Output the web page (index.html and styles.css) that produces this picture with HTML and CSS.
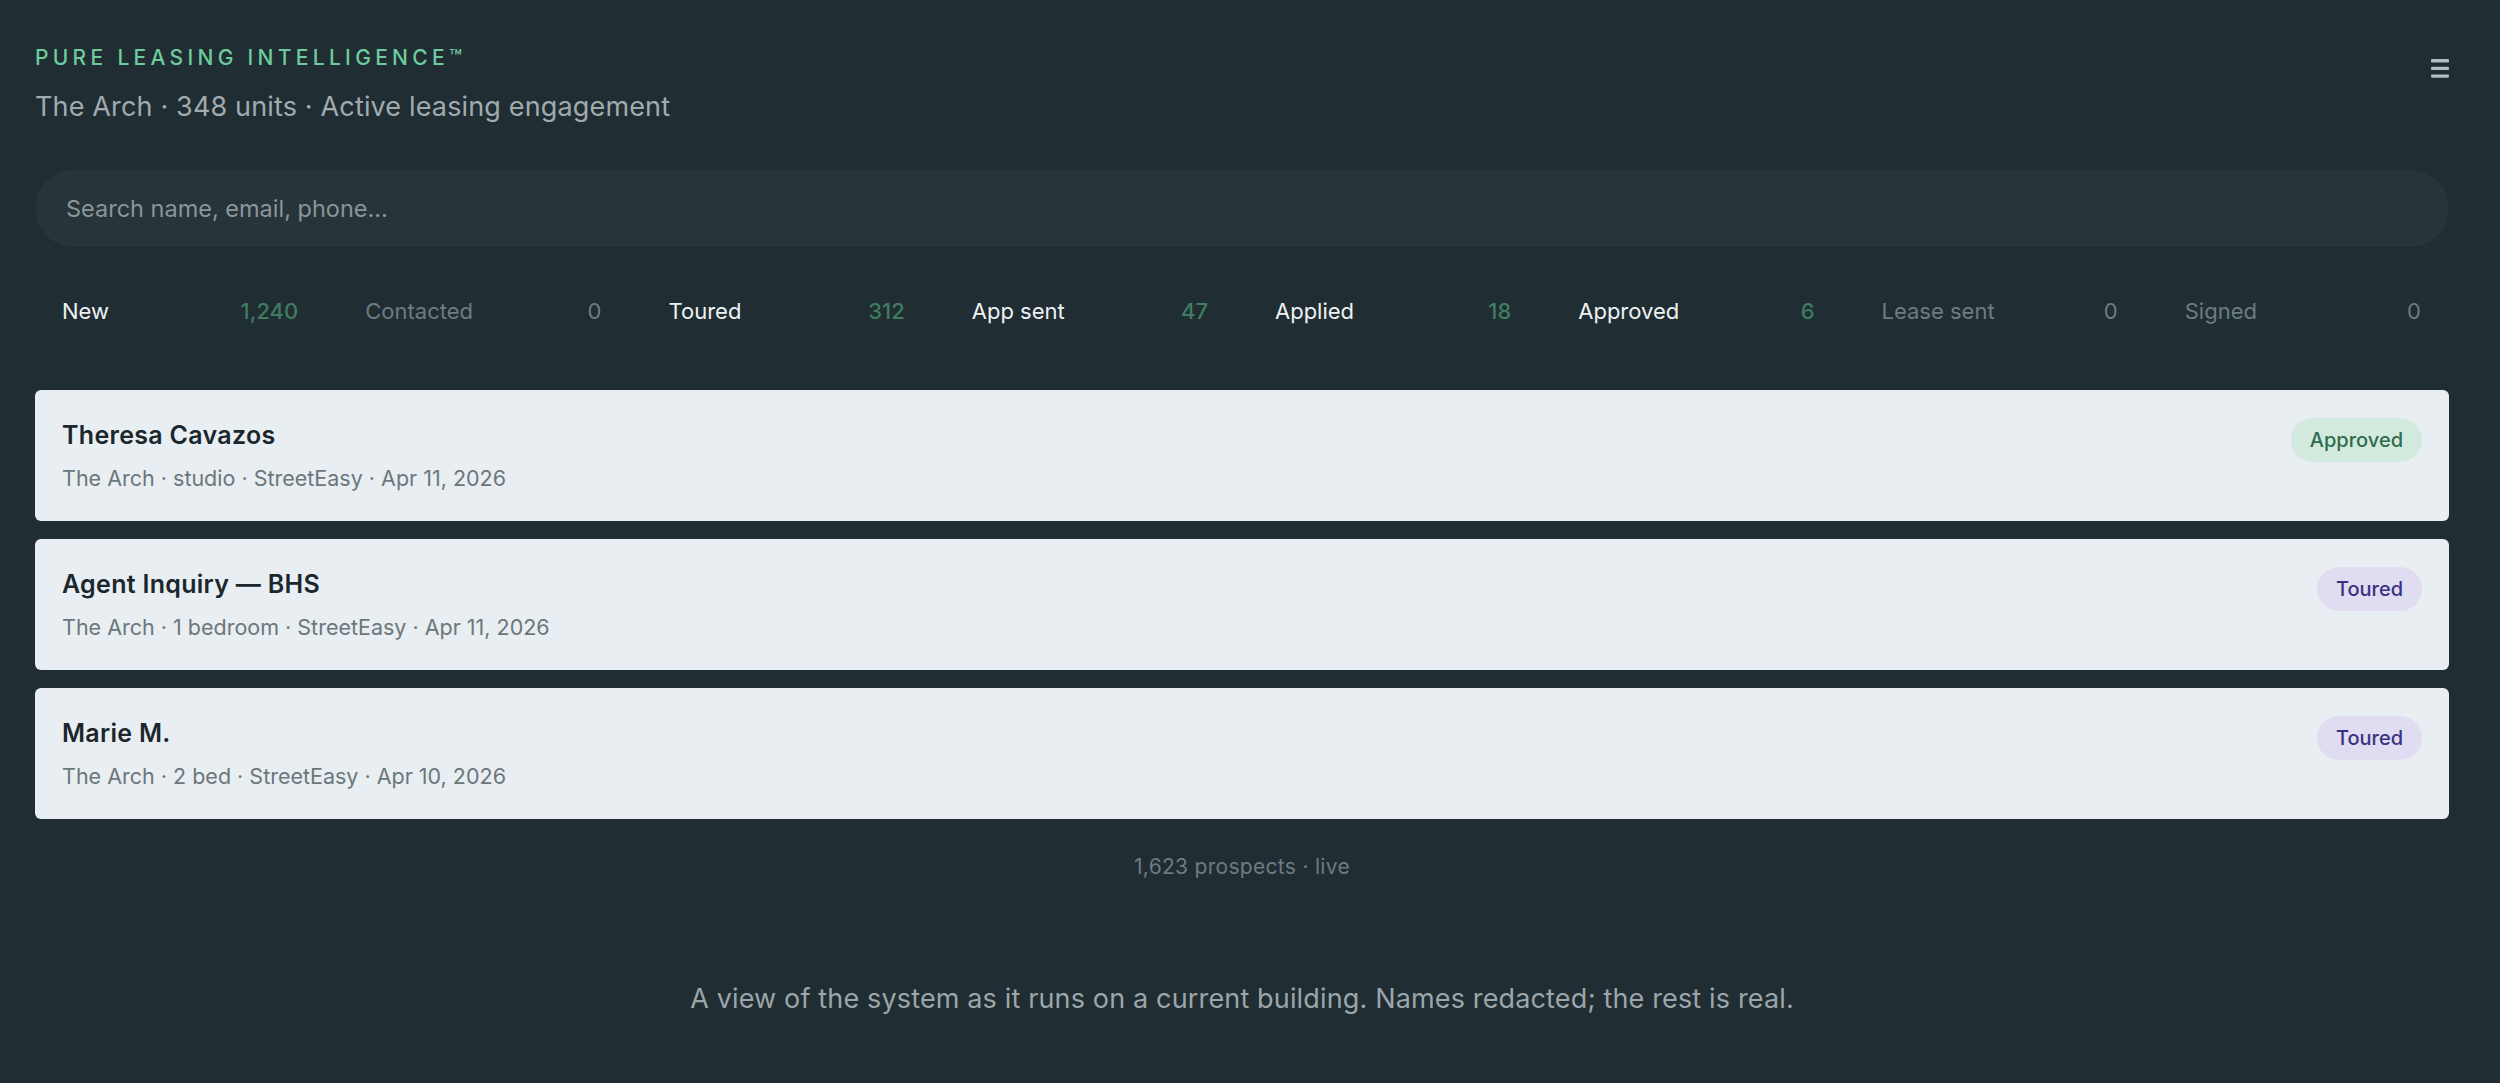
FILE: index.html
```html
<!DOCTYPE html>
<html lang="en">
<head>
    <meta charset="UTF-8">
    <meta name="viewport" content="width=device-width, initial-scale=1.0">
    <title>Pure Leasing Intelligence</title>
    <link rel="stylesheet" href="styles.css">
</head>
<body>
    <div class="app">
        <!-- Header -->
        <header class="header">
            <div>
                <div class="brand">Pure Leasing Intelligence™</div>
                <div class="subtitle">The Arch · 348 units · Active leasing engagement</div>
            </div>
            <button class="menu" aria-label="Menu">
                <svg width="18" height="19" viewBox="0 0 18 19">
                    <rect x="0" y="0" width="18" height="3.4" rx="1.2"/>
                    <rect x="0" y="7.7" width="18" height="3.4" rx="1.2"/>
                    <rect x="0" y="15.4" width="18" height="3.4" rx="1.2"/>
                </svg>
            </button>
        </header>

        <input class="search" type="text" placeholder="Search name, email, phone...">

        <!-- Pipeline stages -->
        <div class="stages">
            <div class="stage"><span class="label">New</span><span class="count">1,240</span></div>
            <div class="stage empty"><span class="label">Contacted</span><span class="count">0</span></div>
            <div class="stage"><span class="label">Toured</span><span class="count">312</span></div>
            <div class="stage"><span class="label">App sent</span><span class="count">47</span></div>
            <div class="stage"><span class="label">Applied</span><span class="count">18</span></div>
            <div class="stage"><span class="label">Approved</span><span class="count">6</span></div>
            <div class="stage empty"><span class="label">Lease sent</span><span class="count">0</span></div>
            <div class="stage empty"><span class="label">Signed</span><span class="count">0</span></div>
        </div>

        <!-- Prospects -->
        <div class="list">
            <div class="card">
                <div>
                    <div class="name">Theresa Cavazos</div>
                    <div class="meta">The Arch · studio · StreetEasy · Apr 11, 2026</div>
                </div>
                <span class="badge approved">Approved</span>
            </div>
            <div class="card">
                <div>
                    <div class="name">Agent Inquiry — BHS</div>
                    <div class="meta">The Arch · 1 bedroom · StreetEasy · Apr 11, 2026</div>
                </div>
                <span class="badge toured">Toured</span>
            </div>
            <div class="card">
                <div>
                    <div class="name">Marie M.</div>
                    <div class="meta">The Arch · 2 bed · StreetEasy · Apr 10, 2026</div>
                </div>
                <span class="badge toured">Toured</span>
            </div>
        </div>

        <div class="total">1,623 prospects · live</div>

        <p class="caption">A view of the system as it runs on a current building. Names redacted; the rest is real.</p>
    </div>
</body>
</html>
```

FILE: styles.css
```css
/* Base styles */
body {
    margin: 0;
    background: #202d33;
    color: #e9eef0;
    font-family: Inter, "Noto Sans", Arial, sans-serif;
}

.app {
    padding: 44px 51px 40px 35px;
}

.header {
    display: flex;
    justify-content: space-between;
    align-items: flex-start;
}

.brand {
    font-size: 21px;
    line-height: 28px;
    font-weight: 500;
    letter-spacing: 4.3px;
    text-transform: uppercase;
    color: #6dcb9e;
}

.subtitle {
    margin-top: 18px;
    font-size: 27px;
    line-height: 34px;
    letter-spacing: 0.15px;
    color: #a1abaf;
}

.menu {
    margin-top: 15px;
    padding: 0;
    border: none;
    background: none;
    fill: #b3bcbf;
    cursor: pointer;
}

.menu svg {
    display: block;
}

.search {
    display: block;
    box-sizing: border-box;
    width: 100%;
    height: 77px;
    margin-top: 46px;
    padding: 0 31px;
    border: none;
    border-radius: 39px;
    background: #27343a;
    color: #e9eef0;
    font-family: inherit;
    font-size: 23.5px;
    outline: none;
}

.search::placeholder {
    color: #8a969a;
}

.stages {
    display: grid;
    grid-template-columns: repeat(8, 1fr);
    gap: 12px;
    margin: 35px 0 50px;
}

.stage {
    display: flex;
    justify-content: space-between;
    padding: 14px 28px 14px 27px;
    font-size: 22px;
    line-height: 30px;
}

.stage .label {
    color: #eef2f3;
}

.stage .count {
    color: #3f7c61;
    font-weight: 500;
}

.stage.empty .label,
.stage.empty .count {
    color: #6e7c81;
    font-weight: 400;
}

.list {
    display: flex;
    flex-direction: column;
    gap: 18px;
}

.card {
    display: flex;
    justify-content: space-between;
    align-items: flex-start;
    padding: 30px 27px 29px;
    background: #e8eef1;
    border-radius: 6px;
}

.name {
    font-size: 25px;
    line-height: 31px;
    font-weight: 600;
    letter-spacing: 0.3px;
    color: #1b272d;
}

.meta {
    margin-top: 14px;
    font-size: 21.5px;
    line-height: 27px;
    color: #6b777b;
}

.badge {
    margin-top: -2px;
    padding: 9px 19px;
    border-radius: 22px;
    font-size: 20px;
    line-height: 26px;
    font-weight: 500;
}

.badge.approved {
    background: #d2eadd;
    color: #2e6b4f;
}

.badge.toured {
    background: #e0dcf2;
    color: #38337f;
}

.total {
    margin-top: 34px;
    text-align: center;
    font-size: 21px;
    line-height: 28px;
    letter-spacing: 0.3px;
    color: #6f7b80;
}

.caption {
    margin: 101px 0 0;
    text-align: center;
    font-size: 27px;
    line-height: 34px;
    letter-spacing: 0.15px;
    color: #9ca6aa;
}
```
